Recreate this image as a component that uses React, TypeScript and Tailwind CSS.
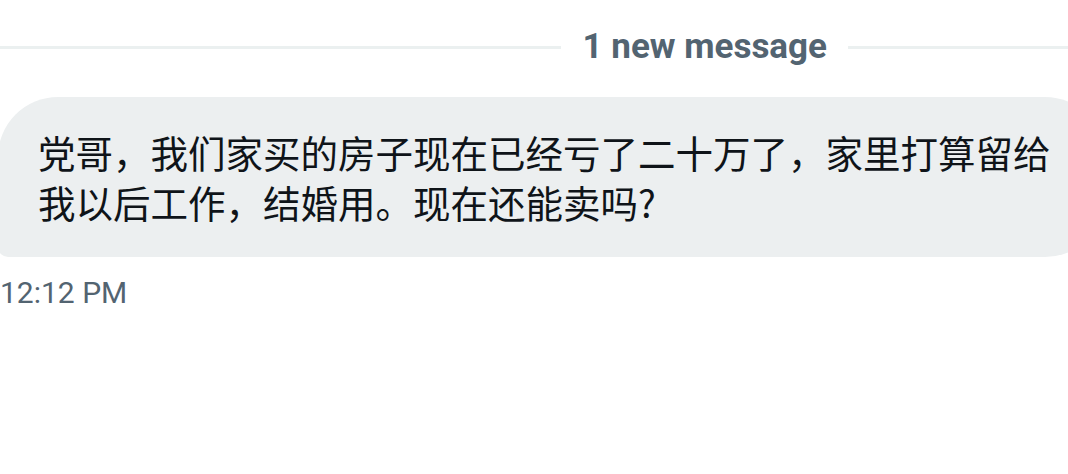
import React from 'react'

const MESSAGE = '党哥，我们家买的房子现在已经亏了二十万了，家里打算留给我以后工作，结婚用。现在还能卖吗?'

const NewMessageDivider = () => (
  <div className="flex items-center pt-[26px]">
    <div className="flex-1 h-[3px] bg-[#ebf0f0]" />
    <span className="px-[21px] text-[35px] leading-[42px] font-bold text-[#536471] font-['Roboto',sans-serif]">
      1 new message
    </span>
    <div className="w-[220px] h-[3px] bg-[#ebf0f0]" />
  </div>
)

const App = () => {
  return (
    <div className="w-[1068px] h-[474px] overflow-hidden bg-white">
      <NewMessageDivider />

      {/* received message */}
      <div className="mt-[29px] ml-[-2px] flex flex-col items-start">
        <div className="w-[1107px] shrink-0 bg-[#eceff0] rounded-[60px] rounded-bl-[10px] px-10 py-[30px]">
          <p className="text-[37.5px] leading-[50px] text-[#0f1419] font-['Noto_Sans_CJK_SC','Noto_Sans',sans-serif]">
            {MESSAGE}
          </p>
        </div>
        <span className="mt-[18px] ml-[2px] text-[30px] leading-[36px] text-[#536471] font-['Roboto',sans-serif]">
          12:12 PM
        </span>
      </div>
    </div>
  )
}

export default App
